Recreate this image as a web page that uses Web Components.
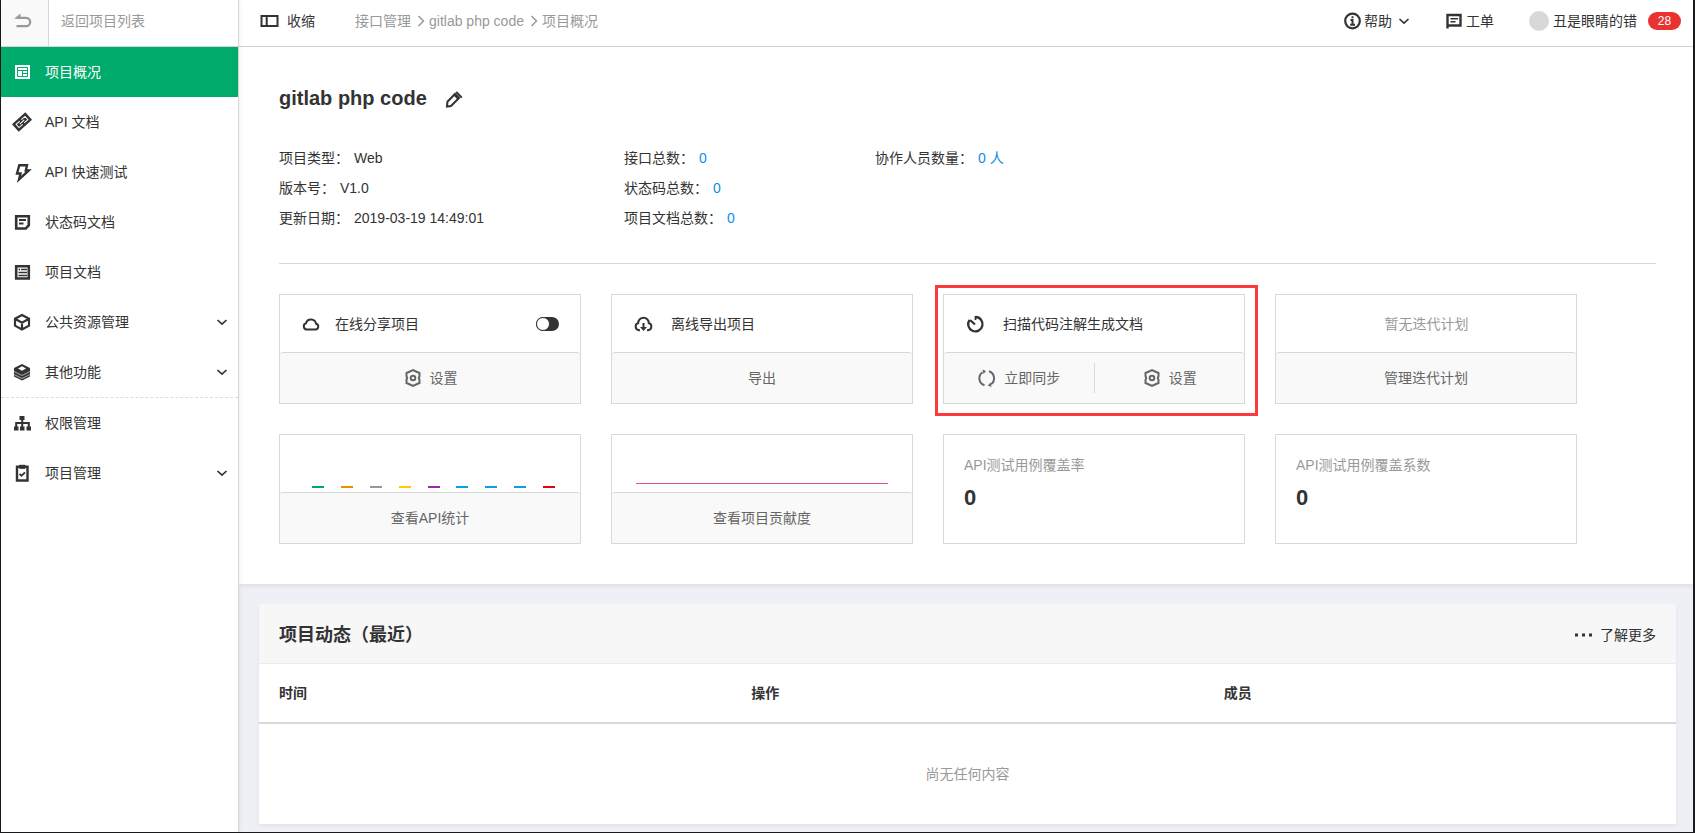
<!DOCTYPE html>
<html lang="zh-CN">
<head>
<meta charset="utf-8">
<meta name="viewport" content="width=device-width, initial-scale=1">
<title>gitlab php code - 项目概况</title>
<style>
  body {
    margin: 0;
    font: 14px/20px "Liberation Sans", "Noto Sans CJK SC", sans-serif;
    color: #333;
    background: #eff0f5;
  }
</style>
</head>
<body>
<project-app></project-app>

<script>
const define = (name, html, setup) => {
  const template = document.createElement('template');
  template.innerHTML = html;
  customElements.define(name, class extends HTMLElement {
    constructor() {
      super();
      this.attachShadow({ mode: 'open' }).append(template.content.cloneNode(true));
    }
    connectedCallback() {
      if (setup) setup(this, this.shadowRoot);
    }
  });
};

/* Every glyph is drawn on an 18 x 18 grid. */
const glyphs = {
  back: '<path d="M7.500 1.500 1 6.800h6.500z" fill="currentColor" stroke="none"/><path d="M4 5.800h9a4.200 4.200 0 0 1 0 8.400H3.500" stroke-width="2.200"/>',
  overview: '<path d="M2 2h15v14H2z" fill="currentColor" stroke="none"/><path d="M4.500 4.500h10v9h-10zM4.500 7.500h10M9.500 7.500v6M9.500 10.500h5" stroke="#00ab6c" stroke-width="1"/>',
  link: '<g transform="rotate(-42 9 9)"><rect x="0" y="4" width="18" height="10" fill="currentColor" stroke="none"/><path d="M8 6.800H3v4.400h5M10 6.800h5v4.400h-5M6 9h6" stroke="#fff" stroke-width="1"/></g>',
  bolt: '<path d="M6.300 2.200h7.700l-1.200 5.300h3L6 16.500l1.500-6H4z" stroke-width="2.400"/>',
  note: '<path d="M3.200 3.200h12.600v9l-3 3.300H3.200z" stroke-width="2.600"/><path d="M6 7h7M6 10.500h4.500" stroke-width="1.800"/>',
  list: '<path d="M3.200 3.200h12.600v12.300H3.200z" stroke-width="2.600"/><path d="M5.500 6.500h1.500M8 6.500h6M5.500 9.500h8.500M5.500 12.500h8.500" stroke-width="1.400"/>',
  cube: '<path d="M9 2 16 5.700v7L9 16.500l-7-3.800v-7zM2 5.700l7 4 7-4M9 9.700v6.800" stroke-width="2.200"/>',
  layers: '<path d="m9 1 8 4v8.500L9 17.500l-8-4V5z" fill="currentColor" stroke="none"/><path d="m9 3.300 4 2.200-4 2.200-4-2.200z" fill="#fff" stroke="none"/><path d="m1 8.500 8 4 8-4M1 11.500l8 4 8-4" stroke="#fff" stroke-width=".6"/>',
  org: '<path d="M6.500 2h5v4h-5zM1 12.500h4.500v4H1zM7 12.500h4.500v4H7zM13.500 12.500H18v4h-4.500z" fill="currentColor" stroke="none"/><path d="M9.200 5v8M3.200 13V9h12.600v4"/>',
  clipboard: '<path d="M4 2.800h10.500v13.700H4z" stroke-width="2.400"/><path d="M6.500 1.300h5.500v3H6.500z" fill="currentColor" stroke-width="1"/><path d="m6.500 9.800 2 2L12 8.300" stroke-width="1.800"/>',
  down: '<path d="m4.500 7 4.500 4.200L13.500 7" stroke-width="1.700"/>',
  right: '<path d="m6.500 4 5 5-5 5" stroke-width="1.500"/>',
  panel: '<path d="M1.500 4h16v10h-16zM6.700 4v10" stroke-width="2"/>',
  info: '<circle cx="9.500" cy="9" r="7.300" stroke-width="2.200"/><path d="M9.500 4.200v2M7.500 8h2v4.500M7.200 12.800H12" stroke-width="2"/>',
  ticket: '<path d="M2.500 3h13v10.500h-13zM2.500 12v4.500" stroke-width="2.400"/><path d="M5.500 6.800h7.500M5.500 9.800h5" stroke-width="1.600"/>',
  edit: '<path d="m2 16.500.4-4.800L10 4l4 4-8 8z"/><path d="m9 4.500 4.500 4.500M11.200 2l5.600 5.600" stroke-width="2"/>',
  cloud: '<path d="M4.500 14.500h9a2.900 2.900 0 0 0 .6-5.700A5.200 5.200 0 0 0 4 8.300a3.200 3.200 0 0 0 .5 6.200z"/>',
  download: '<path d="M6 15.200H5a3.700 3.700 0 0 1-.8-7.200 5.200 5.200 0 0 1 10.600 0A3.700 3.700 0 0 1 14 15.200h-1M9.500 8v5"/><path d="M6 12h7l-3.500 4z" fill="currentColor" stroke="none"/>',
  timer: '<path d="M9.500 2A7.200 7.200 0 1 1 3.500 5" stroke-width="2.300"/><path d="M9 9.500 4 5" stroke-width="2.200"/><path d="M9.500 1v4" stroke-width="1.800"/>',
  gear: '<path d="M7 2.500 10 1.200 13 2.500 16.500 4v3.200L15.800 9l.7 1.800V14L13 15.500l-3 1.300-3-1.300L3.500 14v-3.200L4.200 9l-.7-1.800V4z" stroke-width="2"/><circle cx="10" cy="9" r="2.300" stroke-width="2"/>',
  sync: '<path d="M7.500 16.300A7.400 7.400 0 0 1 5.500 3.200M12 2.200a7.400 7.400 0 0 1 2 13"/><path d="M5.500.5 9 2 6.500 5zM14.500 18l-3.700-1.500 2.700-3z" fill="currentColor" stroke="none"/>',
  more: '<path d="M0 7.500h3v3H0zM7 7.500h3v3H7zM14 7.500h3v3h-3z" fill="currentColor" stroke="none"/>'
};

define('ui-icon', `
  <style>
    :host { display: inline-block; width: 18px; height: 18px; flex: none; }
    svg { display: block; width: 100%; height: 100%; overflow: visible; }
  </style>
  <svg viewBox="0 0 18 18" fill="none" stroke="currentColor" stroke-width="2" aria-hidden="true"></svg>
`, (host, root) => {
  root.querySelector('svg').innerHTML = glyphs[host.getAttribute('name')] || '';
});

define('side-item', `
  <style>
    :host { display: block; }
    a {
      display: flex; align-items: center; gap: 14px;
      height: 50px; padding: 0 7px 0 12px;
      color: inherit; text-decoration: none;
    }
    .label { flex: 1; }
    .arrow { display: none; }
    :host([expandable]) .arrow { display: block; }
    :host([active]) a { background: #00ab6c; color: #fff; }
    :host([divided]) { border-top: 1px dashed #ddd; }
  </style>
  <a href="#"><ui-icon></ui-icon><span class="label"><slot></slot></span><ui-icon class="arrow" name="down"></ui-icon></a>
`, (host, root) => {
  const icon = document.createElement('ui-icon');
  icon.setAttribute('name', host.getAttribute('icon'));
  root.querySelector('ui-icon').replaceWith(icon);
});

define('side-bar', `
  <style>
    :host {
      display: block; width: 237px; flex: none;
      background: #fff; border-right: 1px solid #d6d6d6;
      box-shadow: 0 0 4px rgba(0, 0, 0, .1); position: relative;
    }
    .back {
      display: flex; align-items: stretch; height: 46px;
      border-bottom: 1px solid #d6d6d6;
      color: #999; text-decoration: none;
    }
    .arrow {
      display: flex; align-items: center; padding: 0 17px 4px 12px;
      background: #f9f9f9; border-right: 1px solid #d6d6d6;
    }
    .text { padding: 11px 12px; }
  </style>
  <a class="back" href="#"><span class="arrow"><ui-icon name="back"></ui-icon></span><span class="text">返回项目列表</span></a>
  <nav>
    <side-item icon="overview" active>项目概况</side-item>
    <side-item icon="link">API 文档</side-item>
    <side-item icon="bolt">API 快速测试</side-item>
    <side-item icon="note">状态码文档</side-item>
    <side-item icon="list">项目文档</side-item>
    <side-item icon="cube" expandable>公共资源管理</side-item>
    <side-item icon="layers" expandable>其他功能</side-item>
    <side-item icon="org" divided>权限管理</side-item>
    <side-item icon="clipboard" expandable>项目管理</side-item>
  </nav>
`);

define('top-bar', `
  <style>
    :host {
      display: flex; align-items: center; justify-content: space-between;
      height: 42px; padding: 0 12px 4px 21px;
      background: #fff; border-bottom: 1px solid #d6d6d6;
    }
    div, nav, a, button { display: flex; align-items: center; }
    button { font: inherit; color: inherit; background: none; border: 0; padding: 0; cursor: pointer; }
    a { color: inherit; text-decoration: none; }
    .collapse { gap: 9px; margin-right: 40px; }
    nav { color: #999; }
    nav ui-icon { margin: 0 -1px 0 1px; }
    .help { gap: 3px; margin-right: 32px; }
    .ticket { gap: 3px; margin-right: 35px; }
    .user { gap: 4px; }
    .avatar { width: 20px; height: 20px; border-radius: 50%; background: #d8d8d8; }
    .badge {
      margin-left: 7px; width: 33px; height: 18px; border-radius: 9px;
      background: #e83330; color: #fff; font-size: 12px; line-height: 18px; text-align: center;
    }
  </style>
  <div>
    <button class="collapse" type="button"><ui-icon name="panel"></ui-icon>收缩</button>
    <nav aria-label="面包屑">
      <a href="#">接口管理</a><ui-icon name="right"></ui-icon>
      <a href="#">gitlab php code</a><ui-icon name="right"></ui-icon>
      <a href="#">项目概况</a>
    </nav>
  </div>
  <div>
    <button class="help" type="button"><ui-icon name="info"></ui-icon>帮助<ui-icon name="down"></ui-icon></button>
    <a class="ticket" href="#"><ui-icon name="ticket"></ui-icon>工单</a>
    <a class="user" href="#"><span class="avatar"></span>丑是眼睛的错<span class="badge">28</span></a>
  </div>
`);

define('info-row', `
  <style>
    :host { display: block; line-height: 30px; }
    span { margin-left: 5px; }
    :host([count]) span { color: #0c8ee8; }
  </style>
  <slot name="label"></slot><span><slot></slot></span>
`);

define('project-summary', `
  <style>
    :host { display: block; padding-bottom: 30px; border-bottom: 1px solid #d9d9d9; }
    header { display: flex; align-items: center; gap: 18px; height: 40px; margin-bottom: 24px; }
    h1 { margin: 0; font-size: 20px; line-height: 40px; padding-bottom: 2px; }
    button { display: flex; padding: 0; border: 0; background: none; color: inherit; cursor: pointer; }
    .info { display: grid; grid-template-columns: 345fr 251fr 781fr; }
  </style>
  <header><h1>gitlab php code</h1><button type="button" aria-label="编辑"><ui-icon name="edit"></ui-icon></button></header>
  <div class="info">
    <div>
      <info-row><span slot="label">项目类型：</span>Web</info-row>
      <info-row><span slot="label">版本号：</span>V1.0</info-row>
      <info-row><span slot="label">更新日期：</span>2019-03-19 14:49:01</info-row>
    </div>
    <div>
      <info-row count><span slot="label">接口总数：</span>0</info-row>
      <info-row count><span slot="label">状态码总数：</span>0</info-row>
      <info-row count><span slot="label">项目文档总数：</span>0</info-row>
    </div>
    <div>
      <info-row count><span slot="label">协作人员数量：</span>0 人</info-row>
    </div>
  </div>
`);

define('tool-card', `
  <style>
    :host { display: flex; flex-direction: column; height: 108px; border: 1px solid #d9d9d9; position: relative; }
    .top { display: flex; align-items: center; flex: 1; padding: 0 21px 0 22px; }
    footer { display: flex; align-items: center; height: 50px; background: #f9f9f9; border-top: 1px solid #d9d9d9; border-radius: 3px 3px 0 0; color: #666; }
    :host([highlight])::after {
      content: ""; position: absolute; inset: -10px -14px -13px -9px;
      border: 3px solid #fb3a3a; pointer-events: none;
    }
  </style>
  <div class="top"><slot></slot></div>
  <footer><slot name="action"></slot></footer>
`);

define('card-action', `
  <style>
    :host { display: block; flex: 1; }
    :host([split]) { border-left: 1px solid #d9d9d9; }
    button {
      display: flex; align-items: center; justify-content: center; gap: 9px;
      width: 100%; height: 30px; padding: 0; border: 0; background: none;
      font: inherit; color: inherit; cursor: pointer;
    }
  </style>
  <button type="button"><slot></slot></button>
`);

define('card-title', `
  <style>
    :host { display: flex; align-items: center; gap: 19px; flex: 1; }
    :host([tight]) { gap: 15px; }
  </style>
  <slot></slot>
`);

define('toggle-switch', `
  <style>
    :host { display: block; }
    input {
      appearance: none; display: block; margin: 0; width: 23px; height: 14px;
      border-radius: 7px; background: #333; cursor: pointer;
    }
    input::before {
      content: ""; display: block; width: 12px; height: 12px; border-radius: 50%;
      background: #fff; border: 1px solid #333;
    }
    input:checked::before { margin-left: auto; }
  </style>
  <input type="checkbox" role="switch" aria-label="在线分享项目">
`);

define('stat-bars', `
  <style>
    :host { display: flex; align-items: flex-end; justify-content: space-between; flex: 1; align-self: stretch; padding: 0 4px 4px 10px; }
    i { width: 12px; height: 2px; }
  </style>
`, (host, root) => {
  ['#00a96b', '#f28c00', '#999', '#fc0', '#9c27b0', '#0d9ee8', '#0d9ee8', '#0d9ee8', '#e8000c'].forEach(color => {
    const bar = document.createElement('i');
    bar.style.background = color;
    root.append(bar);
  });
});

define('trend-line', `
  <style>
    :host { display: block; flex: 1; align-self: flex-end; height: 1px; margin: 0 3px 8px 2px; background: #e9518a; }
  </style>
`);

define('metric-card', `
  <style>
    :host { display: block; height: 88px; padding: 20px 20px 0; border: 1px solid #d9d9d9; }
    p { margin: 0 0 9px; color: #999; }
    strong { display: block; font-size: 22px; line-height: 28px; }
  </style>
  <p><slot></slot></p>
  <strong><slot name="value"></slot></strong>
`);

define('tool-grid', `
  <style>
    :host { display: grid; grid-template-columns: repeat(auto-fill, 302px); gap: 30px; padding-top: 30px; }
    .muted { flex: 1; text-align: center; color: #999; }
  </style>
  <tool-card>
    <card-title tight><ui-icon name="cloud"></ui-icon>在线分享项目</card-title>
    <toggle-switch></toggle-switch>
    <card-action slot="action"><ui-icon name="gear"></ui-icon>设置</card-action>
  </tool-card>
  <tool-card>
    <card-title><ui-icon name="download"></ui-icon>离线导出项目</card-title>
    <card-action slot="action">导出</card-action>
  </tool-card>
  <tool-card highlight>
    <card-title><ui-icon name="timer"></ui-icon>扫描代码注解生成文档</card-title>
    <card-action slot="action"><ui-icon name="sync"></ui-icon>立即同步</card-action>
    <card-action slot="action" split><ui-icon name="gear"></ui-icon>设置</card-action>
  </tool-card>
  <tool-card>
    <span class="muted">暂无迭代计划</span>
    <card-action slot="action">管理迭代计划</card-action>
  </tool-card>
  <tool-card>
    <stat-bars></stat-bars>
    <card-action slot="action">查看API统计</card-action>
  </tool-card>
  <tool-card>
    <trend-line></trend-line>
    <card-action slot="action">查看项目贡献度</card-action>
  </tool-card>
  <metric-card>API测试用例覆盖率<span slot="value">0</span></metric-card>
  <metric-card>API测试用例覆盖系数<span slot="value">0</span></metric-card>
`);

define('activity-panel', `
  <style>
    :host { display: block; margin: 20px 17px 8px 20px; border-radius: 3px 3px 0 0; background: #f7f7f7; box-shadow: 0 2px 4px rgba(0, 0, 0, .06); }
    header { display: flex; align-items: center; justify-content: space-between; height: 59px; padding: 0 20px; border-bottom: 1px solid #ececec; }
    h2 { margin: 0; font-size: 18px; line-height: 28px; padding-top: 2px; }
    a { display: flex; align-items: center; gap: 7px; padding-top: 2px; color: inherit; text-decoration: none; }
    table { width: 100%; table-layout: fixed; border-spacing: 0; background: #fff; border-radius: 3px 3px 0 0; }
    th { height: 58px; padding: 0 20px; text-align: left; border-bottom: 2px solid #d9d9d9; }
    td { height: 100px; padding: 0; text-align: center; color: #999; }
  </style>
  <header><h2>项目动态（最近）</h2><a href="#"><ui-icon name="more"></ui-icon>了解更多</a></header>
  <table>
    <thead><tr><th scope="col">时间</th><th scope="col">操作</th><th scope="col">成员</th></tr></thead>
    <tbody><tr><td colspan="3">尚无任何内容</td></tr></tbody>
  </table>
`);

define('project-app', `
  <style>
    :host {
      display: flex; box-sizing: border-box; min-height: 100vh;
      border: solid #1a1a1c; border-width: 0 2px 1px 1px;
    }
    main { flex: 1; min-width: 0; }
    section { padding: 32px 37px 40px 40px; background: #fff; box-shadow: 0 2px 5px rgba(0, 0, 0, .08); }
  </style>
  <side-bar></side-bar>
  <main>
    <top-bar></top-bar>
    <section>
      <project-summary></project-summary>
      <tool-grid></tool-grid>
    </section>
    <activity-panel></activity-panel>
  </main>
`);
</script>
</body>
</html>
